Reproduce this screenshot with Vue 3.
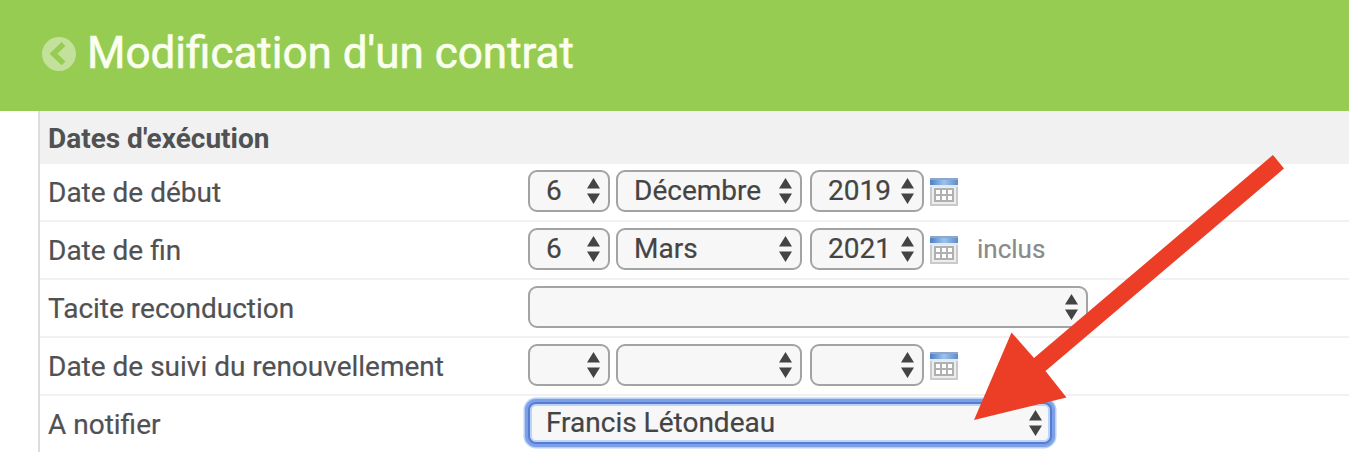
<template>
  <div class="page">
    <header class="entete">
      <svg class="retour" viewBox="0 0 34 34">
        <circle cx="17" cy="17" r="17" fill="#c3e19b" />
        <path d="M21.5 7 L11.5 16.7 L21.5 26.4" fill="none" stroke="#97cc53" stroke-width="5.5" />
      </svg>
      <h1>Modification d'un contrat</h1>
    </header>

    <main class="formulaire">
      <h2>Dates d'exécution</h2>

      <div class="ligne" v-for="ligne in lignes" :key="ligne.label">
        <label class="libelle">{{ ligne.label }}</label>
        <div class="champs">
          <div
            v-for="champ in ligne.champs"
            :key="champ.taille"
            :class="['liste', champ.taille]"
          >
            <select v-model="champ.valeur">
              <option :value="champ.valeur">{{ champ.valeur }}</option>
            </select>
            <svg class="fleches" viewBox="0 0 13 26">
              <path d="M6.5 0 L13 10.5 H0 Z M0 15.5 H13 L6.5 26 Z" fill="#444" />
            </svg>
          </div>
          <svg v-if="ligne.calendrier" class="calendrier" viewBox="0 0 28 28">
            <defs>
              <linearGradient id="bandeau" x1="0" y1="0" x2="1" y2="0">
                <stop offset="0" stop-color="#4d7fc4" />
                <stop offset="0.5" stop-color="#9cc3ee" />
                <stop offset="1" stop-color="#5f8cc8" />
              </linearGradient>
            </defs>
            <rect width="28" height="28" fill="#cacaca" />
            <rect x="2" y="7" width="24" height="19" fill="#ededed" />
            <rect width="28" height="7" fill="url(#bandeau)" />
            <rect width="28" height="2" fill="#8ea6c9" />
            <rect y="7" width="28" height="2" fill="#dfeaf5" />
            <rect x="4" y="10" width="20" height="14" fill="#b0b0b0" />
            <path
              d="M6 12h4v4h-4z M12 12h4v4h-4z M18 12h4v4h-4z M6 18h4v4h-4z M12 18h4v4h-4z M18 18h4v4h-4z"
              fill="#fff"
            />
          </svg>
          <span v-if="ligne.note" class="note">{{ ligne.note }}</span>
        </div>
      </div>
    </main>

    <svg class="pointeur" viewBox="0 0 310 265">
      <path d="M299 0 L310 13.5 L71.5 216 L92.5 242.5 L0 265 L37.5 177.5 L60 203 Z" fill="#ec3e26" />
    </svg>
  </div>
</template>

<script setup>
import { ref } from 'vue'

const dates = (jour, mois, annee) => [
  { taille: 'jour', valeur: jour },
  { taille: 'mois', valeur: mois },
  { taille: 'annee', valeur: annee }
]

const lignes = ref([
  { label: 'Date de début', champs: dates('6', 'Décembre', '2019'), calendrier: true },
  { label: 'Date de fin', champs: dates('6', 'Mars', '2021'), calendrier: true, note: 'inclus' },
  { label: 'Tacite reconduction', champs: [{ taille: 'large', valeur: '' }] },
  { label: 'Date de suivi du renouvellement', champs: dates('', '', ''), calendrier: true },
  { label: 'A notifier', champs: [{ taille: 'contact', valeur: 'Francis Létondeau' }] }
])
</script>

<style>
body {
  margin: 0;
  background: #fff;
  overflow: hidden;
}
</style>

<style scoped>
.page {
  position: relative;
  height: 452px;
  overflow: hidden;
  font-family: Roboto, "Liberation Sans", sans-serif;
  font-size: 28px;
  color: #505153;
  -webkit-text-stroke: 0.2px;
}

.entete {
  display: flex;
  align-items: center;
  gap: 12px;
  box-sizing: border-box;
  height: 111px;
  padding: 0 42px 4px;
  background: #97cc53;
}

.retour {
  width: 34px;
  height: 34px;
}

h1 {
  margin: 0 0 0 -1px;
  padding-bottom: 2px;
  font-size: 44px;
  font-weight: 400;
  line-height: 52px;
  color: #fafff0;
  -webkit-text-stroke: 0.6px;
}

.formulaire {
  margin-left: 38px;
  border-left: 2px solid #dcdcdc;
}

h2 {
  box-sizing: border-box;
  height: 53px;
  margin: 0;
  padding-left: 8px;
  font-size: 28px;
  font-weight: 700;
  line-height: 55px;
  background: #f1f1f1;
  -webkit-text-stroke: 0;
}

.ligne {
  display: flex;
  box-sizing: border-box;
  height: 58px;
  padding-left: 8px;
  border-bottom: 2px solid #f1f1f1;
}

.libelle {
  width: 480px;
  line-height: 57px;
}

.champs {
  display: flex;
  align-items: flex-start;
  padding-top: 6px;
}

.liste {
  position: relative;
  height: 42px;
  margin-right: 6px;
}

.jour {
  width: 82px;
}

.mois {
  width: 186px;
  margin-right: 8px;
}

.annee {
  width: 114px;
}

.large {
  width: 560px;
}

.contact {
  width: 524px;
}

select {
  appearance: none;
  display: block;
  box-sizing: border-box;
  width: 100%;
  height: 42px;
  margin: 0;
  padding: 0 0 1px 16px;
  border: 2px solid #a3a3a3;
  border-radius: 9px;
  outline: none;
  background: #f7f7f7;
  color: #444;
  font-family: inherit;
  font-size: 28px;
  -webkit-text-stroke: 0.2px;
}

.contact select {
  border-color: #557dcf;
  border-radius: 8px;
  box-shadow: inset 0 0 0 2px #bcd4fb, 0 0 0 3px #7c9fe6, 0 0 0 4.5px #b9d0f8;
}

.fleches {
  position: absolute;
  top: 8px;
  right: 10px;
  width: 13px;
  height: 26px;
  pointer-events: none;
}

.calendrier {
  width: 28px;
  height: 28px;
  margin-top: 8px;
}

.note {
  margin-left: 19px;
  font-size: 26px;
  line-height: 42px;
  color: #8a8a8a;
}

/* flèche posée par-dessus le formulaire */
.pointeur {
  position: absolute;
  left: 974px;
  top: 155px;
  width: 310px;
  height: 265px;
  pointer-events: none;
}
</style>
